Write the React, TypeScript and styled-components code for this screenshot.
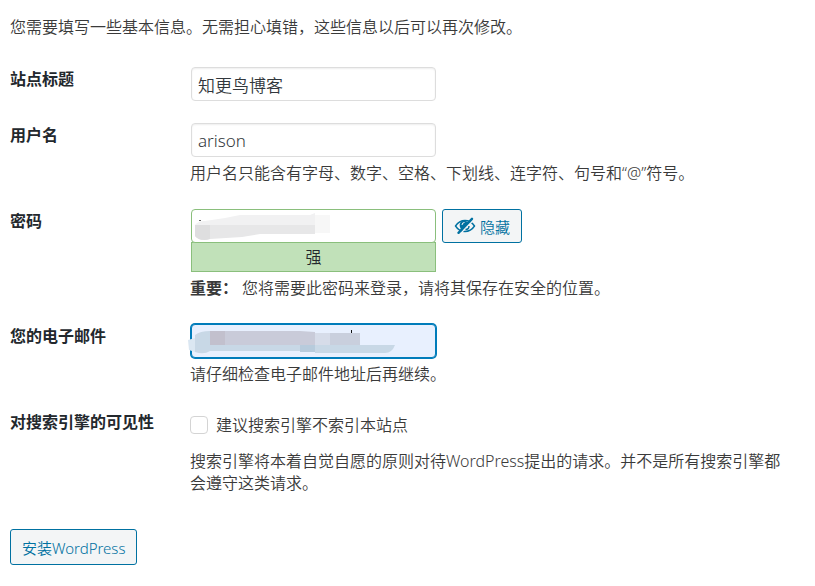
import React from "react";
import styled, { createGlobalStyle, css } from "styled-components";

const GlobalStyle = createGlobalStyle`
  *, *::before, *::after { box-sizing: border-box; }
  body {
    margin: 0;
    background: #fff;
    color: #3a3a3a;
    font-family: "Noto Sans", "Noto Sans CJK SC", sans-serif;
    font-size: 16px;
    font-weight: 350;
    line-height: 22px;
  }
  input, button { font-family: inherit; font-weight: inherit; }
`;

const Page = styled.main`
  padding: 16px 24px 20px 10px;
`;

const Intro = styled.p`
  margin: 0 0 29px;
`;

const Fields = styled.div`
  display: grid;
  row-gap: 22px;
`;

const Row = styled.div`
  display: grid;
  grid-template-columns: 180px minmax(0, 1fr);
`;

const Heading = styled.div`
  padding-top: 1px;
  color: #23282d;
  font-weight: 600;
`;

const Hint = styled.p<{ $spaced?: boolean }>`
  margin: ${(p) => (p.$spaced ? "14px 0 0" : "5px 0 3px")};
`;

const Strong = styled.strong`
  margin-right: 4px;
  font-weight: 600;
`;

const PasswordLine = styled.div`
  display: flex;
  align-items: flex-start;
  gap: 5px;
`;

const FieldBox = styled.div`
  position: relative;
  width: 247px;
  padding: 0 1px;
`;

const TextInput = styled.input<{ $tone?: "strong" | "focused" }>`
  display: block;
  width: 100%;
  height: 34px;
  padding: 0 6px;
  border: 1px solid #ddd;
  border-radius: 4px;
  outline: none;
  background: #fff;
  box-shadow: inset 0 1px 2px rgba(0, 0, 0, 0.07);
  color: #32373c;
  font-size: 17px;
  ${(p) =>
    p.$tone === "strong" &&
    css`
      border-color: #8abf7c;
      box-shadow: none;
    `}
  ${(p) =>
    p.$tone === "focused" &&
    css`
      border-color: #007cba;
      background: #e8f0fe;
      box-shadow: 0 0 0 1px #007cba;
    `}
`;

const Redaction = styled.svg`
  position: absolute;
  top: 0;
  left: 0;
  overflow: visible;
  pointer-events: none;
`;

const Strength = styled.div`
  height: 30px;
  margin: -1px 1px 0;
  width: 245px;
  border: 1px solid #8abf7c;
  background: #c1e1b9;
  color: #23282d;
  line-height: 28px;
  text-align: center;
`;

const Button = styled.button<{ $large?: boolean }>`
  display: inline-flex;
  align-items: center;
  gap: 4px;
  height: ${(p) => (p.$large ? 36 : 34)}px;
  padding: 0 11px;
  border: 1px solid #0071a1;
  border-radius: 3px;
  background: #f3f5f6;
  color: #0071a1;
  font-size: 15px;
  white-space: nowrap;
  cursor: pointer;
`;

const Choice = styled.label`
  display: flex;
  align-items: center;
  gap: 8px;
  padding-top: 4px;
`;

const Checkbox = styled.input`
  appearance: none;
  width: 18px;
  height: 18px;
  margin: 0;
  border: 1px solid #d4d4d4;
  border-radius: 4px;
  background: #fff;
`;

const Actions = styled.div`
  margin-top: 35px;
`;

function HiddenIcon() {
  return (
    <svg width="22" height="20" viewBox="0 0 22 20" fill="none" stroke="currentColor" aria-hidden="true">
      <path d="M1.5 10C4 6.200 7.200 4.500 11 4.500s7 1.700 9.500 5.500C18 13.800 14.800 15.500 11 15.500S4 13.800 1.500 10Z" strokeWidth="1.400" />
      <path d="M7 5.500C4.500 9 6 12.500 8 14L15 7C13 5 10 4.500 7 5.500Z" fill="currentColor" stroke="none" />
      <path d="M10.500 6.500A2.500 2.500 0 0 0 8 9" stroke="#f3f5f6" strokeWidth="1" />
      <path d="M6.500 17.500 20 3.500" stroke="#f3f5f6" strokeWidth="1.500" />
      <path d="M4.500 16.800 18 2.800" strokeWidth="2.400" strokeLinecap="round" />
      <path d="M11.500 13.500c2 0 3.500-1.500 3.500-3.500" strokeWidth="1.400" />
    </svg>
  );
}

export default function App() {
  return (
    <>
      <GlobalStyle />
      <Page>
        <Intro>您需要填写一些基本信息。无需担心填错，这些信息以后可以再次修改。</Intro>
        <form onSubmit={(e) => e.preventDefault()}>
          <Fields>
            <Row>
              <Heading as="label" htmlFor="title">站点标题</Heading>
              <FieldBox><TextInput id="title" defaultValue="知更鸟博客" /></FieldBox>
            </Row>
            <Row>
              <Heading as="label" htmlFor="user">用户名</Heading>
              <div>
                <FieldBox><TextInput id="user" defaultValue="arison" /></FieldBox>
                <Hint>用户名只能含有字母、数字、空格、下划线、连字符、句号和“@”符号。</Hint>
              </div>
            </Row>
            <Row>
              <Heading as="label" htmlFor="password">密码</Heading>
              <div>
                <PasswordLine>
                  <FieldBox>
                    <TextInput id="password" $tone="strong" />
                    <Redaction width="150" height="34" viewBox="0 0 150 34" aria-hidden="true">
                      <path d="M5 16Q8 12 15 12L35 9 50 6H120L125 4V16Z" fill="#f1f1f2" />
                      <path d="M5 16H125V25H70L52 28 20 30Q10 33 5 27Z" fill="#e7e7e8" />
                      <path d="M5 16H20V30Q10 33 5 27Z" fill="#dededf" />
                      <path d="M125 6H140V24H125Z" fill="#f7f7f7" />
                      <path d="M9 11.500h2" stroke="#666" />
                    </Redaction>
                  </FieldBox>
                  <Button type="button"><HiddenIcon />隐藏</Button>
                </PasswordLine>
                <Strength>强</Strength>
                <Hint><Strong>重要：</Strong>您将需要此密码来登录，请将其保存在安全的位置。</Hint>
              </div>
            </Row>
            <Row>
              <Heading as="label" htmlFor="email">您的电子邮件</Heading>
              <div>
                <FieldBox>
                  <TextInput id="email" type="email" $tone="focused" />
                  <Redaction width="210" height="34" viewBox="0 0 210 34" aria-hidden="true">
                    <path d="M-2 16 5 14V28L-1 26Z" fill="#dbe7f2" />
                    <path d="M5 11Q10 7 20 7V21H205Q202 29 195 29H125V27H20Q14 31 5 28Z" fill="#c8d8e6" />
                    <path d="M20 7H110L125 8V21H20Z" fill="#c9cbd9" />
                    <path d="M20 7H35V21H20Z" fill="#c2c0cd" />
                    <path d="M125 9H140V21H125Z" fill="#d6dce9" />
                    <path d="M140 9H170V21H140Z" fill="#c9cfdd" />
                    <path d="M110 21H125V28H110Z" fill="#b7cbdc" />
                    <path d="M161.500 6V9" stroke="#111" />
                  </Redaction>
                </FieldBox>
                <Hint>请仔细检查电子邮件地址后再继续。</Hint>
              </div>
            </Row>
            <Row>
              <Heading>对搜索引擎的可见性</Heading>
              <div>
                <Choice><Checkbox type="checkbox" />建议搜索引擎不索引本站点</Choice>
                <Hint $spaced>搜索引擎将本着自觉自愿的原则对待WordPress提出的请求。并不是所有搜索引擎都会遵守这类请求。</Hint>
              </div>
            </Row>
          </Fields>
          <Actions><Button type="submit" $large><span>安装WordPress</span></Button></Actions>
        </form>
      </Page>
    </>
  );
}
